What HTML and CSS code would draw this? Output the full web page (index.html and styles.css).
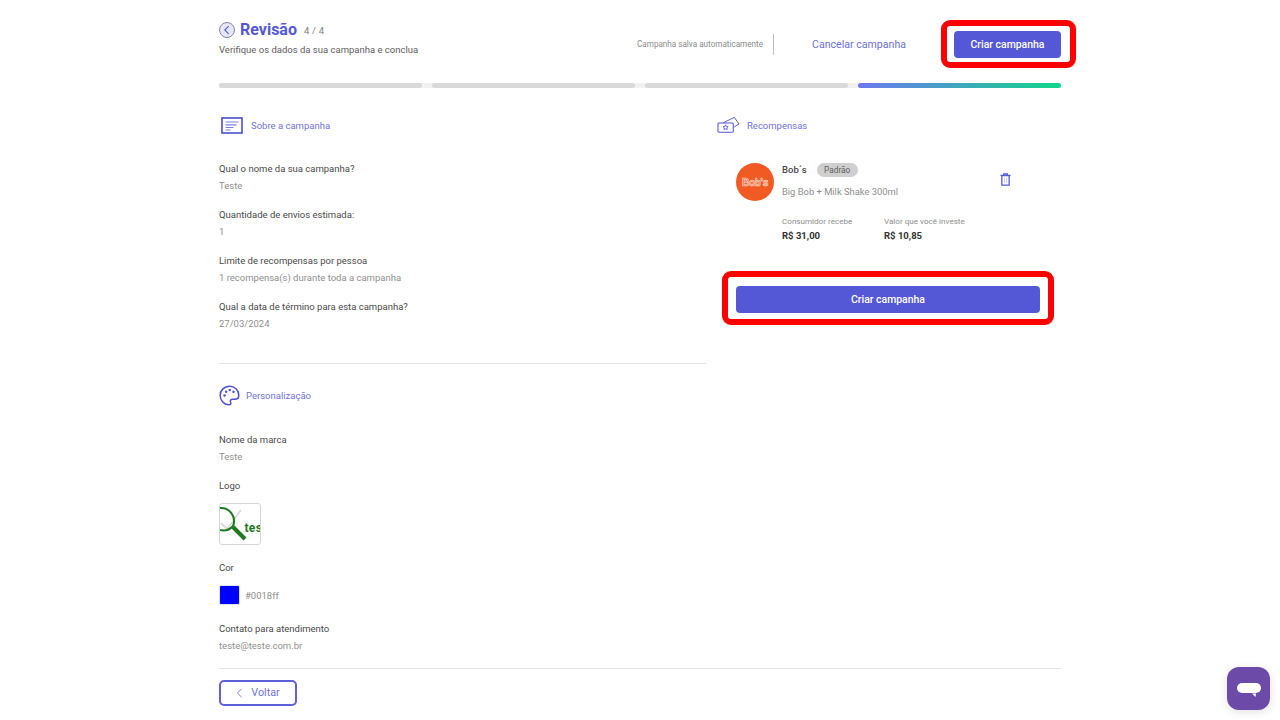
FILE: index.html
```html
<!DOCTYPE html>
<html lang="pt-BR">
<head>
<meta charset="utf-8">
<title>Revisão</title>
<link rel="stylesheet" href="styles.css">
</head>
<body>
<div class="page">
  <header class="top">
    <div class="heading">
      <div class="title-row">
        <svg class="back" viewBox="0 0 16 16"><circle cx="8" cy="8" r="7.500" fill="#e6e7fa" stroke="#77779a" stroke-width=".9"/><path d="M9.600 4.200 5.800 8l3.800 3.800" fill="none" stroke="#5558d6" stroke-width="1.100"/></svg>
        <h1>Revisão</h1>
        <span class="step">4 / 4</span>
      </div>
      <p class="sub">Verifique os dados da sua campanha e conclua</p>
    </div>
    <div class="actions">
      <span class="saved">Campanha salva automaticamente</span>
      <a class="cancel">Cancelar campanha</a>
      <button class="primary top-btn">Criar campanha</button>
    </div>
  </header>

  <div class="progress">
    <i></i><i></i><i></i><i class="active"></i>
  </div>

  <main class="columns">
    <div class="left">
      <section class="about">
        <div class="sec-head">
          <svg class="ic-doc" viewBox="0 0 22 17"><rect x="1" y="1" width="20" height="15" fill="none" stroke="#5558d6" stroke-width="1.700"/><path d="M4.500 5h13M4.500 7.800h11M4.500 10.500h8M4.500 13h5" stroke="#7d80e6" stroke-width="1.200"/></svg>
          <span>Sobre a campanha</span>
        </div>
        <div class="field"><b>Qual o nome da sua campanha?</b><span>Teste</span></div>
        <div class="field"><b>Quantidade de envios estimada:</b><span>1</span></div>
        <div class="field"><b>Limite de recompensas por pessoa</b><span>1 recompensa(s) durante toda a campanha</span></div>
        <div class="field"><b>Qual a data de término para esta campanha?</b><span>27/03/2024</span></div>
      </section>
      <section class="brand">
        <div class="sec-head">
          <svg class="ic-palette" viewBox="0 0 22 22"><path d="M11 1.200C5.400 1.200 1.200 5.600 1.200 11c0 5.400 4.400 9.800 9.300 9.800 1.900 0 2.300-1.300 1.700-2.500-.8-1.600-.1-3.300 1.900-3.300h2.600c2.300 0 4-1.700 4-4C20.700 5.200 16.400 1.200 11 1.200Z" fill="none" stroke="#4f52d8" stroke-width="1.600"/><circle cx="5.800" cy="11" r="1.300" fill="#4f52d8"/><circle cx="7.500" cy="7" r="1.300" fill="#4f52d8"/><circle cx="11.300" cy="5.300" r="1.300" fill="#4f52d8"/><circle cx="15.200" cy="7" r="1.300" fill="#4f52d8"/></svg>
          <span>Personalização</span>
        </div>
        <div class="field"><b>Nome da marca</b><span>Teste</span></div>
        <div class="field logo-field"><b>Logo</b>
          <svg class="logo" viewBox="0 0 40 40">
            <path d="M1 19 7 25 21 6" fill="none" stroke="#dcdcdc" stroke-width="2"/>
            <path d="M0 4A13 13 0 0 1 13 22 13 13 0 0 1 0 26" fill="none" stroke="#1f7a1f" stroke-width="2"/>
            <path d="M13 23 25 35" stroke="#1f7a1f" stroke-width="4"/>
            <text x="24.500" y="28" class="logo-text">tes</text>
          </svg>
        </div>
        <div class="field color-field"><b>Cor</b>
          <div class="color"><i class="swatch"></i><span>#0018ff</span></div>
        </div>
        <div class="field"><b>Contato para atendimento</b><span>teste@teste.com.br</span></div>
      </section>
    </div>

    <aside class="right">
      <div class="sec-head reward-head">
        <svg class="ic-ticket" viewBox="0 0 24 18"><path d="M6 7 18 1l5 7-5 3" fill="none" stroke="#5558d6" stroke-width="1"/><rect x="1" y="7" width="16" height="9.500" rx="1" fill="#fff" stroke="#5558d6" stroke-width="1.100"/><path d="m9 8.800.8 1.700 1.900.2-1.400 1.300.4 1.900-1.700-1-1.700 1 .4-1.900-1.400-1.300 1.900-.2Z" fill="none" stroke="#5558d6" stroke-width=".9"/></svg>
        <span>Recompensas</span>
      </div>
      <div class="reward">
        <div class="reward-top">
          <div class="bobs"><svg viewBox="0 0 38 38"><text x="19" y="22.500" class="bobs-text">Bob's</text></svg></div>
          <div class="reward-info">
            <div class="name-row"><strong>Bob´s</strong><em>Padrão</em></div>
            <p>Big Bob + Milk Shake 300ml</p>
          </div>
          <svg class="trash" viewBox="0 0 12 14"><path d="M.5 2.500h11M4 2.200V.8h4v1.400M2 2.800h8v10.400H2Z" fill="none" stroke="#5558d6" stroke-width="1.400"/><path d="M4.800 5v6M7.200 5v6" stroke="#b9baf0" stroke-width=".8"/></svg>
        </div>
        <div class="stats">
          <div class="stat"><small>Consumidor recebe</small><b>R$ 31,00</b></div>
          <div class="stat"><small>Valor que você investe</small><b>R$ 10,85</b></div>
        </div>
        <button class="primary wide-btn">Criar campanha</button>
      </div>
    </aside>
  </main>

  <footer class="foot">
    <button class="ghost"><svg viewBox="0 0 8 12"><path d="M6.500 1 1.500 6l5 5" fill="none" stroke="#7073e0" stroke-width="1.100"/></svg><span>Voltar</span></button>
  </footer>
</div>

<div class="mark mark-top"></div>
<div class="mark mark-wide"></div>

<div class="chat"><svg viewBox="0 0 24 15"><rect width="24" height="10" rx="5" fill="#fff"/><path d="M15 10.500h4l-.5 3.500Z" fill="#fff"/></svg></div>
</body>
</html>
```
FILE: styles.css
```css
* { box-sizing: border-box; }
html, body { margin: 0; height: 720px; overflow: hidden; background: #fff; }
body { font-family: Roboto, "Liberation Sans", sans-serif; color: #3d3d3d; position: relative; }
.page { width: 842px; margin: 0 auto; }
.top { display: flex; justify-content: space-between; height: 83px; padding-top: 20px; }
.title-row { display: flex; align-items: center; height: 20px; }
.back { width: 16px; height: 16px; margin-right: 5px; }
h1 { margin: 0; font-size: 16px; line-height: 20px; font-weight: 700; color: #5558d6; }
.step { margin-left: 7px; font-size: 9.500px; color: #7d7d7d; letter-spacing: .2px; padding-top: 1px; }
.sub { margin: 3px 0 0; font-size: 9.500px; line-height: 14px; color: #5e5e5e; }
.actions { display: flex; align-items: center; height: 38px; margin-top: 5px; }
.saved { font-size: 8.150px; color: #8c8c8c; padding-right: 10px; line-height: 21px; border-right: 1px solid #bdbdbd; }
.cancel { font-size: 10.600px; color: #6d70de; margin-left: 38px; margin-right: 48px; }
.primary { border: 0; border-radius: 4px; background: #5558d6; color: #fff; font: 500 10.450px Roboto, sans-serif; }
.top-btn { width: 107px; height: 27px; }
.progress { display: grid; grid-template-columns: repeat(4, 203px); gap: 10px; height: 5px; background: #f1f1f1; border-radius: 3px; }
.progress i { background: #d9d9d9; border-radius: 3px; }
.progress i.active { background: linear-gradient(90deg, #6d78f0, #10d68a); }
.columns { display: grid; grid-template-columns: 487px 344px; gap: 11px; height: 580px; }
.left { display: flex; flex-direction: column; }
.about { height: 276px; padding-top: 27px; border-bottom: 1px solid #e2e2e2; }
.brand { padding-top: 21px; }
.sec-head { display: flex; align-items: center; height: 20px; font-size: 9.500px; color: #7073e0; }
.ic-doc { width: 22px; height: 17px; margin: 0 8px 0 2px; }
.ic-palette { width: 21px; height: 21px; margin-right: 6px; }
.ic-ticket { width: 23px; height: 18px; margin-right: 7px; }
.field { display: flex; flex-direction: column; align-items: flex-start; margin-bottom: 12px; font-size: 9.500px; line-height: 17px; }
.about .sec-head + .field { margin-top: 25px; }
.field b { font-weight: 400; color: #4a4a4a; }
.field span { color: #8f8f8f; }
.brand .sec-head + .field { margin-top: 26px; }
.logo { width: 42px; height: 42px; margin-top: 9px; border: 1px solid #d5d5d5; border-radius: 3px; }
.logo-field { margin-bottom: 14px; }
.logo-text { font: 700 12px Roboto, sans-serif; fill: #1f7a1f; letter-spacing: .3px; }
.color-field { margin-bottom: 15px; }
.color { display: flex; align-items: center; margin-top: 9px; height: 20px; }
.swatch { width: 21px; height: 20px; background: #0000ff; border: 1px solid #e0e0e0; border-radius: 2px; margin-right: 5px; }
.right { padding-top: 27px; }
.reward { padding: 28px 21px 0 19px; width: 344px; }
.reward-top { display: flex; align-items: flex-start; height: 38px; }
.bobs { width: 38px; height: 38px; border-radius: 50%; background: #f15a22; flex: none; margin-right: 8px; }
.bobs svg { display: block; }
.bobs-text { font: 700 10px "Liberation Sans", sans-serif; fill: #f15a22; stroke: #fbd5c4; stroke-width: .7px; text-anchor: middle; letter-spacing: -.3px; }
.reward-info { width: 218px; }
.name-row { display: flex; align-items: center; height: 14px; }
.name-row strong { font-size: 9.500px; font-weight: 500; color: #4a4a4a; padding-bottom: 1px; }
.name-row em { margin-left: 10px; width: 41px; height: 14px; border-radius: 7px; background: #cfcfcf; font-style: normal; font-size: 8.300px; line-height: 14px; text-align: center; color: #5f5f5f; }
.reward-info p { margin: 8px 0 0; font-size: 9.400px; line-height: 14px; color: #8e8e8e; }
.trash { width: 11px; height: 13px; margin-top: 10px; flex: none; }
.stats { display: flex; margin: 14px 0 0 46px; }
.stat { width: 102px; display: flex; flex-direction: column; }
.stat small { font-size: 8.100px; line-height: 13px; color: #8e8e8e; }
.stat b { font-size: 9.500px; line-height: 14px; font-weight: 700; color: #333; margin-top: 1px; }
.wide-btn { display: block; width: 304px; height: 27px; margin-top: 43px; }
.foot { border-top: 1px solid #e2e2e2; padding-top: 11px; }
.ghost { display: flex; align-items: center; justify-content: center; gap: 8px; width: 78px; height: 26px; padding: 0 0 1px 0; background: #fff; border: 2px solid #5e61da; border-radius: 5px; color: #7073e0; font: 400 10.800px Roboto, sans-serif; }
.ghost svg { width: 7px; height: 10px; }
.mark { position: absolute; border: 6px solid #ff0000; border-radius: 9px; pointer-events: none; }
.mark-top { left: 941px; top: 20px; width: 135px; height: 48px; }
.mark-wide { left: 722px; top: 271px; width: 332px; height: 54px; }
.chat { position: absolute; left: 1227px; top: 667px; width: 43px; height: 43px; border-radius: 12px; background: #6c4aa8; box-shadow: 0 2px 10px rgba(0,0,0,.12); display: flex; align-items: center; justify-content: center; }
.chat svg { width: 24px; height: 15px; margin-top: 4px; }
```
